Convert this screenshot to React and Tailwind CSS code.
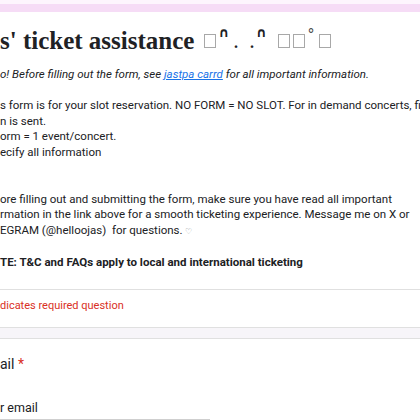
import React from "react";

const Tofu = ({ className = "" }) => (
  <span className={`mt-[8px] w-[12px] h-[14px] border border-[#a8a8a8] ${className}`} />
);

const Hat = ({ className = "" }) => (
  <span className={`mt-[1px] text-[13px] leading-[12px] font-bold font-['DejaVu_Sans',sans-serif] text-[#202124] ${className}`}>∩</span>
);

const Dot = ({ className = "" }) => (
  <span className={`mt-[10px] text-[16px] leading-[14px] font-['Liberation_Serif',serif] font-bold text-[#202124] ${className}`}>.</span>
);

export default function App() {
  const body = "font-['Roboto','Liberation_Sans',sans-serif] text-[#202124]";
  return (
    <div className="w-[420px] h-[420px] overflow-hidden bg-[#f7f5f9]">
      <div className="h-[4px] bg-[#fdf5fd]" />
      <div className="h-[8px] bg-[#f6dcf6]" />
      <div className="bg-white border-b border-[#e0e0e0]">
        <div className="pt-[14px] pb-[18px] border-b border-[#e0e0e0]">
          <div className="h-[30px] flex items-start whitespace-nowrap">
            <span className="leading-[30px] font-['Liberation_Serif',serif] font-bold text-[25px] text-[#202124]">s' ticket assistance</span>
            <Tofu className="ml-[10px]" />
            <Hat className="ml-[2px]" />
            <Dot className="ml-[5px]" />
            <Dot className="ml-[12px]" />
            <Hat className="ml-[2px]" />
            <Tofu className="ml-[11px]" />
            <Tofu className="ml-[3px]" />
            <span className="mt-[1px] ml-[3px] text-[14px] leading-[14px] font-['DejaVu_Sans',sans-serif] text-[#444]">°</span>
            <Tofu className="ml-[4px]" />
          </div>
          <div className={`mt-[11px] text-[11.5px] leading-[15.6px] whitespace-nowrap ${body}`}>
            <div className="italic">
              o! Before filling out the form, see{" "}
              <span className="text-[#1a73e8] underline">jastpa carrd</span> for all important information.
            </div>
            <div className="h-[15.6px]" />
            <div>s form is for your slot reservation. NO FORM = NO SLOT. For in demand concerts, final</div>
            <div>n is sent.</div>
            <div>orm = 1 event/concert.</div>
            <div>ecify all information</div>
            <div className="h-[31.2px]" />
            <div>ore filling out and submitting the form, make sure you have read all important</div>
            <div>rmation in the link above for a smooth ticketing experience. Message me on X or</div>
            <div>
              EGRAM (@helloojas)&nbsp; for questions. <span className="text-[8px] text-[#9aa0a6]">♡</span>
            </div>
            <div className="h-[15.6px]" />
            <div className="font-bold">TE: T&amp;C and FAQs apply to local and international ticketing</div>
          </div>
        </div>
        <div className={`h-[37px] pb-[3px] flex items-center text-[11px] text-[#d93025] ${body}`}>
          dicates required question
        </div>
      </div>
      <div className="h-[10px]" />
      <div className="bg-white border-t border-[#e0e0e0] h-[100px]">
        <div className={`pt-[15px] text-[14px] leading-[20px] ${body}`}>
          ail <span className="text-[#d93025]">*</span>
        </div>
        <div className="mt-[25px] w-[210px] border-b border-[#cfcfcf] pb-[2px]">
          <div className={`text-[12.5px] leading-[18px] ${body} text-[#70757a]`}>r email</div>
        </div>
      </div>
    </div>
  );
}
